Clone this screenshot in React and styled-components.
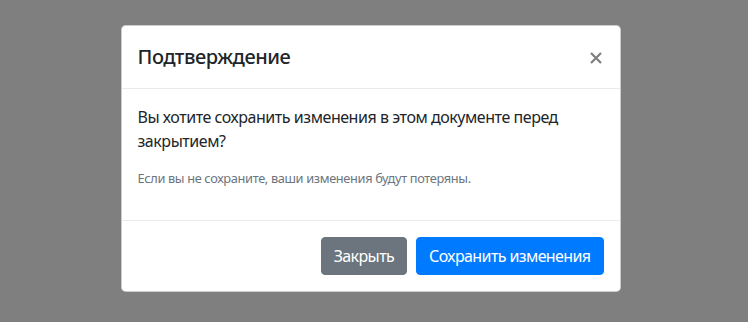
import React from "react"
import styled, { createGlobalStyle } from "styled-components"

const GlobalStyle = createGlobalStyle`
  html, body {
    margin: 0;
    padding: 0;
    background: #7f7f7f;
  }
  body {
    font-family: "Noto Sans", "Open Sans", Arial, sans-serif;
    color: #212529;
  }
`

const Backdrop = styled.div`
  width: 748px;
  height: 322px;
  box-sizing: border-box;
  padding: 25px 7px 0 0;
  display: flex;
  justify-content: center;
  align-items: flex-start;
  background: #7f7f7f;
`

const Dialog = styled.div`
  width: 500px;
  box-sizing: border-box;
  background: #fff;
  border: 1px solid rgba(0, 0, 0, 0.2);
  border-radius: 4.8px;
  display: flex;
  flex-direction: column;
  letter-spacing: -0.45px;
`

const Header = styled.div`
  display: flex;
  align-items: center;
  justify-content: space-between;
  padding: 16px;
  border-bottom: 1px solid #e9ecef;
`

const Title = styled.h5`
  margin: 0;
  font-size: 20px;
  font-weight: 500;
  line-height: 30px;
`

const Close = styled.button`
  display: flex;
  border: 0;
  background: transparent;
  padding: 1px 2px 0 0;
  margin-left: auto;
  opacity: 0.5;
  cursor: pointer;
`

const Body = styled.div`
  padding: 16px;
`

const Text = styled.p`
  margin: 0 0 16px;
  font-size: 16px;
  line-height: 24px;
  color: ${p => (p.muted ? "#6c757d" : "#212529")};
  ${p => p.small && "font-size: 12.8px; line-height: 19px; letter-spacing: -0.35px;"}
`

const Footer = styled.div`
  display: flex;
  justify-content: flex-end;
  align-items: center;
  gap: 9px;
  padding: 16px;
  border-top: 1px solid #e9ecef;
`

const Button = styled.button`
  height: 38px;
  padding: 0 12px;
  border: 1px solid ${p => p.color};
  background: ${p => p.color};
  color: #fff;
  border-radius: 4px;
  font-family: inherit;
  font-size: 16px;
  line-height: 24px;
  letter-spacing: -0.6px;
  cursor: pointer;
`

const CloseIcon = () => (
  <svg width="12" height="12" viewBox="0 0 12 12">
    <path d="M1 1L11 11M11 1L1 11" stroke="#000" strokeWidth="2.2" strokeLinecap="butt" />
  </svg>
)

export default function App() {
  return (
    <>
      <GlobalStyle />
      <Backdrop>
        <Dialog>
          <Header>
            <Title>Подтверждение</Title>
            <Close aria-label="Close"><CloseIcon /></Close>
          </Header>
          <Body>
            <Text>Вы хотите сохранить изменения в этом документе перед закрытием?</Text>
            <Text small muted>Если вы не сохраните, ваши изменения будут потеряны.</Text>
          </Body>
          <Footer>
            <Button color="#6c757d">Закрыть</Button>
            <Button color="#007bff">Сохранить изменения</Button>
          </Footer>
        </Dialog>
      </Backdrop>
    </>
  )
}
